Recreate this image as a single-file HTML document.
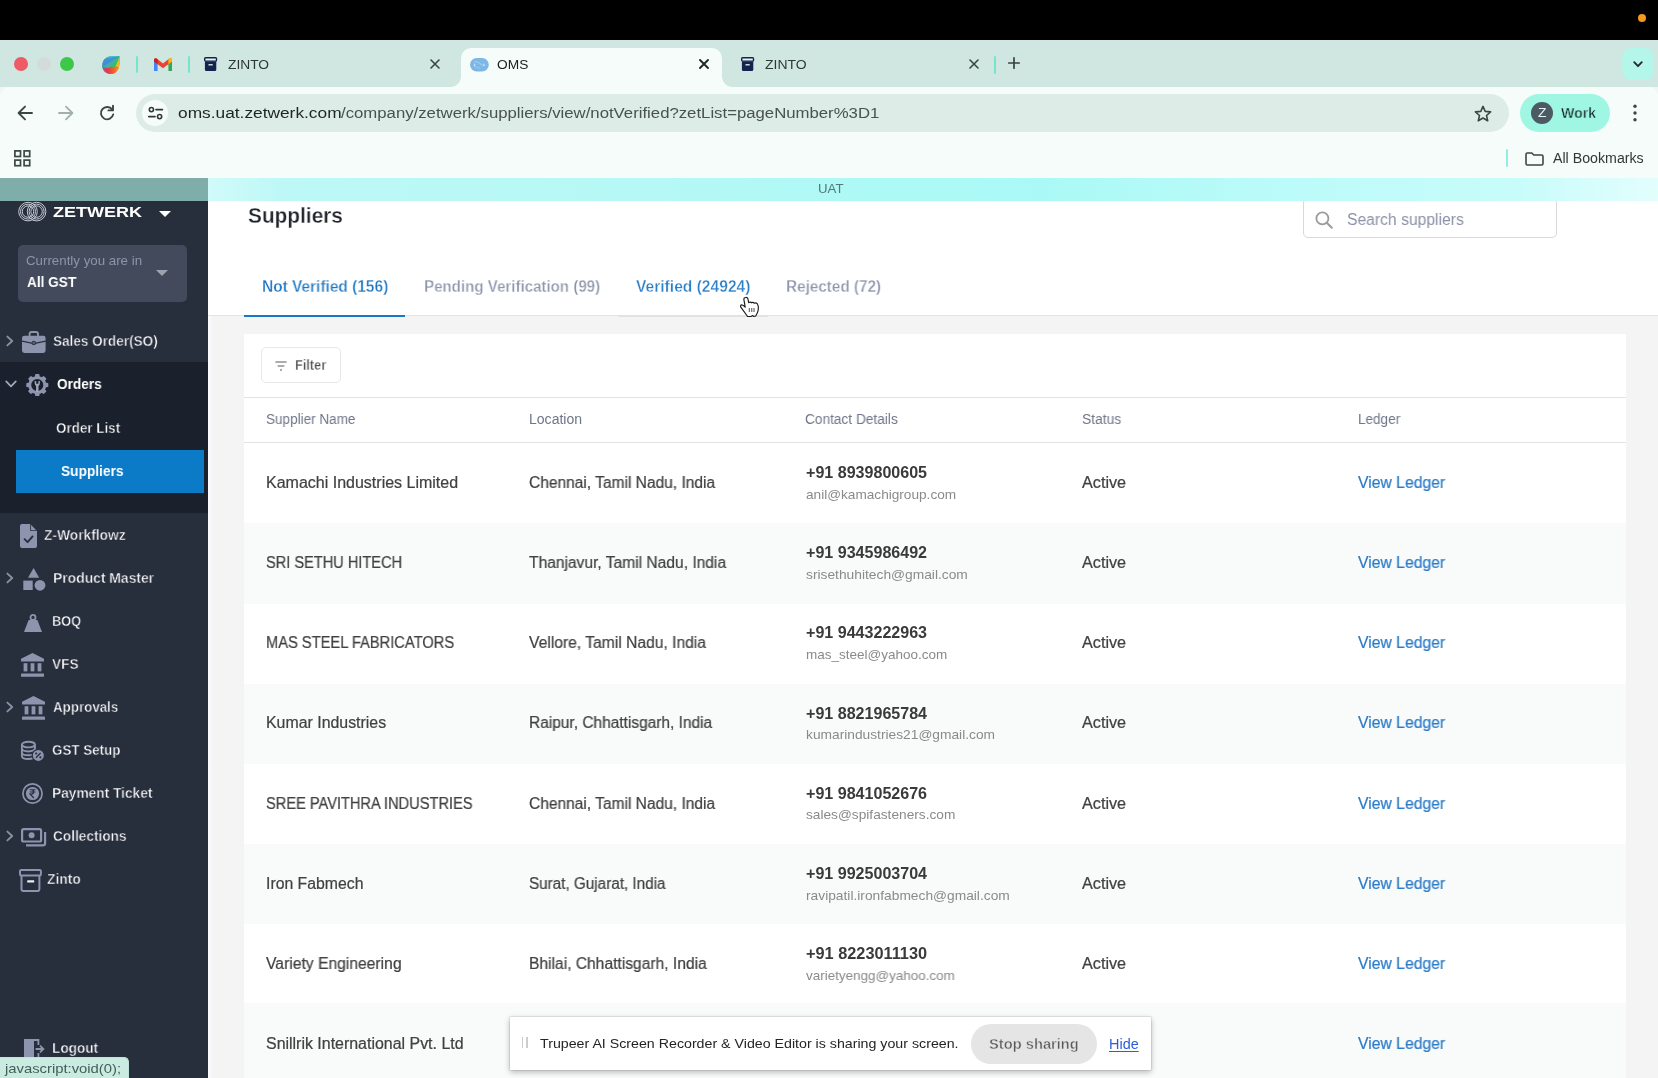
<!DOCTYPE html>
<html lang="en"><head><meta charset="utf-8"><title>OMS</title>
<style>
*{box-sizing:border-box;margin:0;padding:0}
html,body{width:1658px;height:1078px;overflow:hidden;background:#f4f4f4}
body{position:relative;font-family:"Liberation Sans",sans-serif;color:#3f3f3f;-webkit-font-smoothing:antialiased}
div,span,svg,aside,main,nav,header,section,a{position:absolute;display:block}
.t{white-space:nowrap;will-change:transform}
.m{-webkit-text-stroke:0.35px currentColor}
.b{font-weight:700}
.r{-webkit-text-stroke:0.22px currentColor}
a{text-decoration:none;color:inherit}
.ic{overflow:visible}
/* ---- OS + browser chrome ---- */
#osbar{left:0;top:0;width:1658px;height:40px;background:#000}
#osdot{left:1638px;top:14px;width:8px;height:8px;border-radius:50%;background:#f39a1e}
#tabstrip{left:0;top:40px;width:1658px;height:47px;background:#cfe7e0}
.tl{width:14px;height:14px;border-radius:50%;top:17px}
.tabsep{width:2px;height:17px;top:16px;background:#7be3cc;border-radius:1px}
#tab-active{left:461px;top:8px;width:261px;height:39px;background:#f6fcf9;border-radius:10px 10px 0 0}
#tab-active:before,#tab-active:after{content:"";position:absolute;bottom:0;width:10px;height:10px}
#tab-active:before{left:-10px;background:radial-gradient(circle at 0 0,transparent 9.5px,#f6fcf9 10px)}
#tab-active:after{right:-10px;background:radial-gradient(circle at 100% 0,transparent 9.5px,#f6fcf9 10px)}
#tabmenu{left:1622px;top:8px;width:32px;height:32px;border-radius:9px;background:#b4f6ea}
#toolbar{left:0;top:87px;width:1658px;height:91px;background:#f6fcf9;border-radius:9px 9px 0 0}
#omnibox{left:136px;top:7px;width:1373px;height:38px;border-radius:19px;background:#deece7}
#siteinfo{left:6px;top:6px;width:26px;height:26px;border-radius:50%;background:#f6fcf9}
#profile{left:1520px;top:7px;width:90px;height:38px;border-radius:19px;background:#9ff6e2}
#avatar{left:11px;top:8px;width:22px;height:22px;border-radius:50%;background:#4b5a63}
#bmsep{left:1506px;top:62px;width:2px;height:18px;background:#8ff0de;border-radius:1px}
/* ---- app ---- */
#uat{z-index:2;left:208px;top:178px;width:1450px;height:23.2px;background:linear-gradient(90deg,#d0fbfa 0%,#bdf8f6 5%,#b6f8f5 30%,#adf9f6 46%,#abf9f6 58%,#bbfbf9 74%,#c7fcfa 90%,#e2fefd 100%)}
#sidetop{z-index:2;left:0;top:178px;width:208px;height:23.2px;background:#7faeaa}
#sidebar{left:0;top:201px;width:208px;height:877px;background:#272e3c;overflow:hidden}
#gstbox{left:18px;top:44.4px;width:169px;height:56.6px;border-radius:5px;background:#434a5b}
#navopen{left:0;top:161px;width:208px;height:151px;background:#1b212c}
#navsel{left:16px;top:248.6px;width:187.6px;height:43.2px;background:#0b7bc8}
.caret{width:0;height:0;border-left:6px solid transparent;border-right:6px solid transparent;border-top:6px solid #fff}
#main{left:208px;top:200.8px;width:1450px;height:878px;background:#f4f4f4;overflow:hidden}
#head{left:0;top:0;width:1450px;height:115.4px;background:#fff;border-bottom:1px solid #e4e4e4}
#search{left:1095px;top:-2.8px;width:254px;height:40px;border:1px solid #d9d9d9;border-radius:5px;background:#fff}
#tabline{left:36px;top:113.9px;width:161px;height:2.6px;background:#1b77c5}
#hoverline{left:410px;top:114.4px;width:150px;height:1.6px;background:#e2e2e2}
#card{left:36px;top:133.2px;width:1382px;height:760px;background:#fff}
#filterbtn{left:16.5px;top:13px;width:80px;height:36px;border:1px solid #e8e8e8;border-radius:5px;background:#fff}
.hl{left:0;width:1382px;height:1.4px;background:#e3e3e3}
.row{left:0;width:1382px;height:80px}
.row.alt{background:#f9fafa}
/* ---- overlays ---- */
#share{left:510px;top:1017.2px;width:641px;height:52.4px;background:#fff;box-shadow:0 0 0 0.6px rgba(0,0,0,.12),0 2px 6px rgba(0,0,0,.28)}
#stopbtn{left:461.4px;top:6.5px;width:126px;height:40.4px;border-radius:20.2px;background:#e5e5e5}
.grip{width:1.4px;height:11px;top:19.4px;background:#cdcdcd}
#status{left:0;top:1057px;width:129px;height:21px;background:#c9ebe0;border-radius:0 5px 0 0;border-top:1px solid #c0e2d8;border-right:1px solid #c0e2d8}
#edge{left:0;top:115px;width:5px;height:770px;background:linear-gradient(90deg,#fbfcff,#f4f4f4)}

</style></head>
<body>
<div id="osbar"><div id="osdot"></div></div>
<header id="tabstrip"><div class="tl" style="left:14px;background:#ee5a66"></div><div class="tl" style="left:37px;background:#d4dcd9"></div><div class="tl" style="left:60px;background:#3ec84a"></div><svg class="ic" style="left:101.8px;top:15.7px" width="18" height="18" viewBox="0 0 18 18" ><defs><clipPath id="lf"><path d="M9 0.3 C13 0.3 17.4 0.2 17.8 0.4 C18 4.4 17.8 8.6 16.6 12 C15 16.4 11.6 18 8.6 18 C4 18 0.3 14.4 0.3 9.6 C0.3 4.4 4.2 0.3 9 0.3 Z"/></clipPath><linearGradient id="lfb" x1="0" y1="0" x2="1" y2="0"><stop offset="0" stop-color="#8d5bc4"/><stop offset="0.35" stop-color="#e23a4e"/><stop offset="0.7" stop-color="#f2642a"/><stop offset="1" stop-color="#f7a325"/></linearGradient></defs><g clip-path="url(#lf)"><rect width="18" height="18" fill="#41b95e"/><path d="M18 0 L-2 4 L-2 -2 Z" fill="#37bfe0"/><path d="M18 0 L-2 4 L-2 13 Z" fill="#3f8fdc"/><path d="M18 0 L-2 13 L-2 20 L2 20 Z" fill="#3db2a0"/><path d="M18 0 L11 20 L20 20 Z" fill="#f6b52c"/><path d="M18 0 L9.6 20 L12.4 20 Z" fill="#c9cf3a"/><path d="M-1 11 C3 11.4 7 13 8.6 10.4 C10 12 13 12 14.6 10 L18 12 L18 19 L-1 19 Z" fill="url(#lfb)"/></g></svg><div class="tabsep" style="left:136px"></div><svg class="ic" style="left:154px;top:17.8px" width="18" height="13" viewBox="0 0 18 13" ><path d="M0 2 V13 H3.6 V6.2 Z" fill="#4285f4"/><path d="M18 2 V13 H14.4 V6.2 Z" fill="#34a853"/><path d="M0 2 Q0 0.3 1.6 0.3 Q2.4 0.3 3 0.8 L9 5.4 L15 0.8 Q15.6 0.3 16.4 0.3 Q18 0.3 18 2 V3.4 L9 10.2 L0 3.4 Z" fill="#ea4335"/><path d="M14.4 1.3 L15 0.8 Q15.6 0.3 16.4 0.3 Q18 0.3 18 2 V3.4 L14.4 6.2 Z" fill="#fbbc04"/><path d="M3.6 1.3 L3 0.8 Q2.4 0.3 1.6 0.3 Q0 0.3 0 2 V3.4 L3.6 6.2 Z" fill="#c5221f"/></svg><div class="tabsep" style="left:188px"></div><svg class="ic" style="left:203.6px;top:17.1px" width="13.2" height="14.2" viewBox="0 0 13.2 14.2" ><rect x="0.7" y="0.7" width="11.8" height="3.4" rx="0.9" fill="#e6f1ee" stroke="#13234d" stroke-width="1.4"/><path d="M0.9 4.6 H12.3 V12.4 Q12.3 13.9 10.8 13.9 H2.4 Q0.9 13.9 0.9 12.4 Z" fill="#13234d"/><rect x="4.4" y="6.9" width="4.4" height="1.5" rx="0.5" fill="#c9d6dd"/></svg><span class="t" style="left:228.4px;top:15.7px;font-size:13px;line-height:17px;color:#2d3836;transform:scaleX(1.060);transform-origin:0 50%;">ZINTO</span><svg class="ic" style="left:430px;top:19px" width="10" height="10" viewBox="0 0 10 10" ><path d="M1 1 L9 9 M9 1 L1 9" stroke="#3a4442" stroke-width="1.6" stroke-linecap="round"/></svg><div id="tab-active"></div><svg class="ic" style="left:469.5px;top:18px" width="19" height="14" viewBox="0 0 19 14" ><rect x="0" y="0" width="18.8" height="13.4" rx="6.7" fill="#7db7e6"/><path d="M4.2 4 C7 2.4 9 5 11 6.4 C12.6 7.6 14 8 15.4 7" fill="none" stroke="#9fcbee" stroke-width="1.1"/><path d="M3.6 7.6 C5.6 9.6 8 9 10 10.4" fill="none" stroke="#9fcbee" stroke-width="1"/><rect x="4" y="5.4" width="1.3" height="2.8" rx="0.6" fill="#c3e0f6"/><rect x="13.2" y="5.4" width="1.3" height="2.8" rx="0.6" fill="#c3e0f6"/></svg><span class="t" style="left:496.8px;top:15.5px;font-size:13px;line-height:17px;color:#1b1f1e;transform:scaleX(1.057);transform-origin:0 50%;">OMS</span><svg class="ic" style="left:698.5px;top:19px" width="10" height="10" viewBox="0 0 10 10" ><path d="M1 1 L9 9 M9 1 L1 9" stroke="#1d2826" stroke-width="1.9" stroke-linecap="round"/></svg><svg class="ic" style="left:740.6px;top:17.1px" width="13.2" height="14.2" viewBox="0 0 13.2 14.2" ><rect x="0.7" y="0.7" width="11.8" height="3.4" rx="0.9" fill="#e6f1ee" stroke="#13234d" stroke-width="1.4"/><path d="M0.9 4.6 H12.3 V12.4 Q12.3 13.9 10.8 13.9 H2.4 Q0.9 13.9 0.9 12.4 Z" fill="#13234d"/><rect x="4.4" y="6.9" width="4.4" height="1.5" rx="0.5" fill="#c9d6dd"/></svg><span class="t" style="left:765.0px;top:15.7px;font-size:13px;line-height:17px;color:#2d3836;transform:scaleX(1.073);transform-origin:0 50%;">ZINTO</span><svg class="ic" style="left:968.5px;top:19px" width="10" height="10" viewBox="0 0 10 10" ><path d="M1 1 L9 9 M9 1 L1 9" stroke="#3a4442" stroke-width="1.6" stroke-linecap="round"/></svg><div class="tabsep" style="left:994px;top:16px;height:17.5px"></div><svg class="ic" style="left:1008px;top:17.4px" width="12" height="12" viewBox="0 0 12 12" ><path d="M6 0.8 V11.2 M0.8 6 H11.2" stroke="#3a4442" stroke-width="1.7" stroke-linecap="round"/></svg><div id="tabmenu"></div><svg class="ic" style="left:1632.5px;top:21px" width="10" height="7" viewBox="0 0 10 7" ><path d="M1.2 1.2 L5 5.2 L8.8 1.2" fill="none" stroke="#1f2a28" stroke-width="1.8" stroke-linecap="round" stroke-linejoin="round"/></svg></header>
<div id="toolbar"><svg class="ic" style="left:17px;top:18px" width="16" height="16" viewBox="0 0 16 16" ><path d="M15 8 H2 M8 1.6 L1.6 8 L8 14.4" fill="none" stroke="#3c4644" stroke-width="1.9" stroke-linecap="round" stroke-linejoin="round"/></svg><svg class="ic" style="left:58px;top:18px" width="16" height="16" viewBox="0 0 16 16" ><path d="M1 8 H14 M8 1.6 L14.4 8 L8 14.4" fill="none" stroke="#a3afab" stroke-width="1.8" stroke-linecap="round" stroke-linejoin="round"/></svg><svg class="ic" style="left:98.5px;top:18px" width="16" height="16" viewBox="0 0 16 16" ><path d="M13.2 4.6 A6.2 6.2 0 1 0 14.2 9.4" fill="none" stroke="#3c4644" stroke-width="1.9" stroke-linecap="round"/><path d="M14 0.8 V5.4 H9.4" fill="none" stroke="#3c4644" stroke-width="1.9" stroke-linecap="round" stroke-linejoin="round"/></svg><div id="omnibox"><div id="siteinfo"></div></div><svg class="ic" style="left:147.5px;top:19px" width="15" height="14" viewBox="0 0 15 14" ><circle cx="3.4" cy="3.6" r="2.1" fill="none" stroke="#2f3836" stroke-width="1.6"/><path d="M8 3.6 H14.4" stroke="#2f3836" stroke-width="1.7" stroke-linecap="round"/><circle cx="11.6" cy="10.6" r="2.1" fill="none" stroke="#2f3836" stroke-width="1.6"/><path d="M0.8 10.6 H7" stroke="#2f3836" stroke-width="1.7" stroke-linecap="round"/></svg><span class="t" style="left:177.5px;top:16.2px;font-size:15.5px;line-height:20px;color:#1c2523;transform:scaleX(1.117);transform-origin:0 50%;">oms.uat.zetwerk.com</span><span class="t" style="left:341.1px;top:16.2px;font-size:15.5px;line-height:20px;color:#48524f;transform:scaleX(1.080);transform-origin:0 50%;">/company/zetwerk/suppliers/view/notVerified?zetList=pageNumber%3D1</span><svg class="ic" style="left:1474px;top:17.5px" width="18" height="17" viewBox="0 0 18 17" ><path d="M9 1.4 L11.2 6.4 L16.6 6.9 L12.5 10.5 L13.7 15.8 L9 13 L4.3 15.8 L5.5 10.5 L1.4 6.9 L6.8 6.4 Z" fill="none" stroke="#3c4644" stroke-width="1.6" stroke-linejoin="round"/></svg><div id="profile"><div id="avatar"></div></div><span class="t" style="left:1538.3px;top:18.3px;font-size:12px;line-height:16px;color:#e6f3ef;transform:scaleX(1.157);transform-origin:0 50%;">Z</span><span class="t b" style="left:1561.2px;top:16.8px;font-size:14.6px;line-height:19px;color:#0c2422;transform:scaleX(0.969);transform-origin:0 50%;-webkit-text-stroke:0.45px #9ff6e2;">Work</span><svg class="ic" style="left:1633px;top:17px" width="4" height="18" viewBox="0 0 4 18" ><circle cx="2" cy="2.2" r="1.7" fill="#3c4644"/><circle cx="2" cy="9" r="1.7" fill="#3c4644"/><circle cx="2" cy="15.8" r="1.7" fill="#3c4644"/></svg><svg class="ic" style="left:14px;top:62.5px" width="17" height="17" viewBox="0 0 17 17" ><rect x="0.9" y="0.9" width="5.6" height="5.6" fill="none" stroke="#3c4644" stroke-width="1.7"/><rect x="10.1" y="0.9" width="5.6" height="5.6" fill="none" stroke="#3c4644" stroke-width="1.7"/><rect x="0.9" y="10.1" width="5.6" height="5.6" fill="none" stroke="#3c4644" stroke-width="1.7"/><rect x="10.1" y="10.1" width="5.6" height="5.6" fill="none" stroke="#3c4644" stroke-width="1.7"/></svg><div id="bmsep"></div><svg class="ic" style="left:1525px;top:64.5px" width="19" height="14" viewBox="0 0 19 14" ><path d="M1 2.4 Q1 1 2.4 1 H6.8 L8.8 3 H16.6 Q18 3 18 4.4 V11.6 Q18 13 16.6 13 H2.4 Q1 13 1 11.6 Z" fill="none" stroke="#3c4644" stroke-width="1.6" stroke-linejoin="round"/></svg><span class="t" style="left:1552.9px;top:62.2px;font-size:14px;line-height:18px;color:#2f3836;transform:scaleX(1.014);transform-origin:0 50%;">All Bookmarks</span></div>
<div id="sidetop"></div>
<div id="uat"><span class="t" style="left:609.5px;top:2.1px;font-size:13px;line-height:17px;color:#4f7b7b;transform:scaleX(1.018);transform-origin:0 50%;">UAT</span></div>
<aside id="sidebar"><svg class="ic" style="left:17.5px;top:-0.5px" width="29" height="21" viewBox="0 0 29 21" ><circle cx="10" cy="10.6" r="9.3" fill="none" stroke="#c6c9d3" stroke-width="1"/><circle cx="18.6" cy="10.6" r="9.3" fill="none" stroke="#c6c9d3" stroke-width="1"/><circle cx="10" cy="10.6" r="7.5" fill="none" stroke="#c6c9d3" stroke-width="1"/><circle cx="18.6" cy="10.6" r="7.5" fill="none" stroke="#c6c9d3" stroke-width="1"/><circle cx="10" cy="10.6" r="5.7" fill="none" stroke="#c6c9d3" stroke-width="1"/><circle cx="18.6" cy="10.6" r="5.7" fill="none" stroke="#c6c9d3" stroke-width="1"/></svg><span class="t b" style="left:52.5px;top:0.5px;font-size:15px;line-height:20px;color:#fff;transform:scaleX(1.201);transform-origin:0 50%;">ZETWERK</span><div class="caret" style="left:158.5px;top:9.5px"></div><div id="gstbox"></div><span class="t" style="left:25.5px;top:50.8px;font-size:13px;line-height:17px;color:#8d94a8;transform:scaleX(1.023);transform-origin:0 50%;">Currently you are in</span><span class="t b" style="left:26.5px;top:71.9px;font-size:14.8px;line-height:19px;color:#fff;transform:scaleX(0.919);transform-origin:0 50%;">All GST</span><div class="caret" style="left:156px;top:69px;border-top-color:#9da2ad;border-left-width:6.5px;border-right-width:6.5px;border-top-width:6.5px"></div><div id="navopen"></div><div id="navsel"></div><svg class="ic" style="left:6px;top:134px" width="8" height="12" viewBox="0 0 8 12" ><path d="M1.4 1.6 L6.2 6 L1.4 10.4" fill="none" stroke="#8a90a6" stroke-width="1.9" stroke-linecap="round" stroke-linejoin="round"/></svg><svg class="ic" style="left:22.2px;top:129.8px" width="24" height="22" viewBox="0 0 24 22" ><path d="M7.6 5 V3 Q7.6 1 9.6 1 H14 Q16 1 16 3 V5" fill="none" stroke="#8d94ad" stroke-width="1.9"/><path d="M2.4 4.8 H21.2 Q23.6 4.8 23.6 7.2 V9.4 L14 11.4 Q13.6 9.8 11.8 9.8 Q10 9.8 9.6 11.4 L0 9.4 V7.2 Q0 4.8 2.4 4.8 Z" fill="#8d94ad"/><path d="M0 10.7 L9.5 12.7 Q10 14 11.8 14 Q13.6 14 14.1 12.7 L23.6 10.7 V19.6 Q23.6 22 21.2 22 H2.4 Q0 22 0 19.6 Z" fill="#8d94ad"/><ellipse cx="11.8" cy="11.9" rx="1.5" ry="1.1" fill="#8d94ad" opacity="0.55"/></svg><span class="t b" style="left:52.9px;top:130.0px;font-size:15px;line-height:20px;color:#fdfdfe;transform:scaleX(0.903);transform-origin:0 50%;-webkit-text-stroke:0.45px #272e3c;">Sales Order(SO)</span><svg class="ic" style="left:4.9px;top:179.2px" width="12" height="8" viewBox="0 0 12 8" ><path d="M1.2 1.4 L6 6.4 L10.8 1.4" fill="none" stroke="#a3a9bc" stroke-width="1.7" stroke-linecap="round" stroke-linejoin="round"/></svg><svg class="ic" style="left:26.4px;top:173px" width="22.6" height="22" viewBox="0 0 22.6 22" ><path d="M9.2 0.6 Q9.2 0 9.8 0 H12.8 Q13.4 0 13.4 0.6 L14 4.6 H8.6 Z" fill="#8d94ad" transform="rotate(0 11.3 11)"/><path d="M9.2 0.6 Q9.2 0 9.8 0 H12.8 Q13.4 0 13.4 0.6 L14 4.6 H8.6 Z" fill="#8d94ad" transform="rotate(45 11.3 11)"/><path d="M9.2 0.6 Q9.2 0 9.8 0 H12.8 Q13.4 0 13.4 0.6 L14 4.6 H8.6 Z" fill="#8d94ad" transform="rotate(90 11.3 11)"/><path d="M9.2 0.6 Q9.2 0 9.8 0 H12.8 Q13.4 0 13.4 0.6 L14 4.6 H8.6 Z" fill="#8d94ad" transform="rotate(135 11.3 11)"/><path d="M9.2 0.6 Q9.2 0 9.8 0 H12.8 Q13.4 0 13.4 0.6 L14 4.6 H8.6 Z" fill="#8d94ad" transform="rotate(180 11.3 11)"/><path d="M9.2 0.6 Q9.2 0 9.8 0 H12.8 Q13.4 0 13.4 0.6 L14 4.6 H8.6 Z" fill="#8d94ad" transform="rotate(225 11.3 11)"/><path d="M9.2 0.6 Q9.2 0 9.8 0 H12.8 Q13.4 0 13.4 0.6 L14 4.6 H8.6 Z" fill="#8d94ad" transform="rotate(270 11.3 11)"/><path d="M9.2 0.6 Q9.2 0 9.8 0 H12.8 Q13.4 0 13.4 0.6 L14 4.6 H8.6 Z" fill="#8d94ad" transform="rotate(315 11.3 11)"/><circle cx="11.3" cy="11" r="7.6" fill="none" stroke="#8d94ad" stroke-width="3"/><path d="M8.6 7 L8.8 9.8 Q9 11.4 10.1 12 V18 H12.5 V12 Q13.6 11.4 13.8 9.8 L14 7 L12.4 7.2 V9.8 H10.2 V7.2 Z" fill="#a0a6bd"/></svg><span class="t b" style="left:56.5px;top:173.5px;font-size:14.8px;line-height:19px;color:#fff;transform:scaleX(0.923);transform-origin:0 50%;">Orders</span><span class="t b" style="left:56.1px;top:217.0px;font-size:15px;line-height:20px;color:#fdfdfe;transform:scaleX(0.894);transform-origin:0 50%;-webkit-text-stroke:0.45px #1b212c;">Order List</span><span class="t b" style="left:60.5px;top:260.5px;font-size:14.8px;line-height:19px;color:#fff;transform:scaleX(0.927);transform-origin:0 50%;">Suppliers</span><svg class="ic" style="left:20px;top:323px" width="17" height="24" viewBox="0 0 17 24" ><path d="M2 0 H10 L17 7 V22 Q17 24 15 24 H2 Q0 24 0 22 V2 Q0 0 2 0 Z" fill="#8d94ad"/><path d="M10 0 V5.4 Q10 7 11.6 7 H17 Z" fill="#272e3c"/><path d="M10.8 0.8 L16.2 6.2 H11.8 Q10.8 6.2 10.8 5.2 Z" fill="#8d94ad"/><path d="M4.6 15.2 L7.6 18.2 L12.6 12.4" fill="none" stroke="#272e3c" stroke-width="1.9" stroke-linecap="round" stroke-linejoin="round"/></svg><span class="t b" style="left:44.0px;top:324.0px;font-size:15px;line-height:20px;color:#fdfdfe;transform:scaleX(0.918);transform-origin:0 50%;-webkit-text-stroke:0.45px #272e3c;">Z-Workflowz</span><svg class="ic" style="left:6px;top:371px" width="8" height="12" viewBox="0 0 8 12" ><path d="M1.4 1.6 L6.2 6 L1.4 10.4" fill="none" stroke="#8a90a6" stroke-width="1.9" stroke-linecap="round" stroke-linejoin="round"/></svg><svg class="ic" style="left:23px;top:367px" width="23" height="23" viewBox="0 0 23 23" ><path d="M10.6 0 L16.2 9.8 H5 Z" fill="#8d94ad"/><rect x="0.3" y="12.6" width="9.4" height="9.4" fill="#8d94ad"/><circle cx="17" cy="17.3" r="5.4" fill="#8d94ad"/></svg><span class="t b" style="left:53.1px;top:367.0px;font-size:15px;line-height:20px;color:#fdfdfe;transform:scaleX(0.926);transform-origin:0 50%;-webkit-text-stroke:0.45px #272e3c;">Product Master</span><svg class="ic" style="left:23.5px;top:412.5px" width="18" height="18" viewBox="0 0 18 18" ><circle cx="9" cy="3.4" r="2.5" fill="none" stroke="#8d94ad" stroke-width="1.8"/><path d="M4.6 6 H13.4 L18 18 H0 Z" fill="#8d94ad"/></svg><span class="t b" style="left:52.1px;top:410.0px;font-size:15px;line-height:20px;color:#fdfdfe;transform:scaleX(0.852);transform-origin:0 50%;-webkit-text-stroke:0.45px #272e3c;">BOQ</span><svg class="ic" style="left:21px;top:451.5px" width="23" height="24" viewBox="0 0 23 24" ><path d="M11.5 0 L23 5.8 V8.6 H0 V5.8 Z" fill="#8d94ad"/><rect x="2.6" y="10.2" width="3.8" height="8.2" fill="#8d94ad"/><rect x="9.6" y="10.2" width="3.8" height="8.2" fill="#8d94ad"/><rect x="16.6" y="10.2" width="3.8" height="8.2" fill="#8d94ad"/><rect x="0" y="20.6" width="23" height="3.2" rx="0.6" fill="#8d94ad"/></svg><span class="t b" style="left:52.1px;top:453.0px;font-size:15px;line-height:20px;color:#fdfdfe;transform:scaleX(0.908);transform-origin:0 50%;-webkit-text-stroke:0.45px #272e3c;">VFS</span><svg class="ic" style="left:6px;top:500px" width="8" height="12" viewBox="0 0 8 12" ><path d="M1.4 1.6 L6.2 6 L1.4 10.4" fill="none" stroke="#8a90a6" stroke-width="1.9" stroke-linecap="round" stroke-linejoin="round"/></svg><svg class="ic" style="left:22px;top:494.5px" width="23" height="24" viewBox="0 0 23 24" ><path d="M11.5 0 L23 5.8 V8.6 H0 V5.8 Z" fill="#8d94ad"/><rect x="2.6" y="10.2" width="3.8" height="8.2" fill="#8d94ad"/><rect x="9.6" y="10.2" width="3.8" height="8.2" fill="#8d94ad"/><rect x="16.6" y="10.2" width="3.8" height="8.2" fill="#8d94ad"/><rect x="0" y="20.6" width="23" height="3.2" rx="0.6" fill="#8d94ad"/></svg><span class="t b" style="left:53.1px;top:496.0px;font-size:15px;line-height:20px;color:#fdfdfe;transform:scaleX(0.890);transform-origin:0 50%;-webkit-text-stroke:0.45px #272e3c;">Approvals</span><svg class="ic" style="left:21.2px;top:539.8px" width="24" height="21" viewBox="0 0 24 21" ><ellipse cx="7.4" cy="3.6" rx="6.5" ry="2.8" fill="none" stroke="#8d94ad" stroke-width="1.9"/><path d="M0.9 3.6 V15 C0.9 19 13.9 19 13.9 15 V3.6" fill="none" stroke="#8d94ad" stroke-width="1.9"/><path d="M0.9 7.6 C0.9 11.4 13.9 11.4 13.9 7.6 M0.9 11.4 C0.9 15.2 13.9 15.2 13.9 11.4" fill="none" stroke="#8d94ad" stroke-width="1.9"/><circle cx="17.3" cy="14.4" r="6.1" fill="#8d94ad" stroke="#272e3c" stroke-width="1.2"/><path d="M15 16.8 L19.6 12" stroke="#272e3c" stroke-width="1.3"/><circle cx="15.2" cy="12.5" r="1.1" fill="#272e3c"/><circle cx="19.4" cy="16.3" r="1.1" fill="#272e3c"/></svg><span class="t b" style="left:52.1px;top:539.0px;font-size:15px;line-height:20px;color:#fdfdfe;transform:scaleX(0.893);transform-origin:0 50%;-webkit-text-stroke:0.45px #272e3c;">GST Setup</span><svg class="ic" style="left:22px;top:582px" width="21" height="21" viewBox="0 0 21 21" ><circle cx="10.5" cy="10.5" r="9.6" fill="none" stroke="#8d94ad" stroke-width="1.7"/><circle cx="10.5" cy="10.5" r="6.6" fill="#8d94ad"/><path d="M7.8 6.8 H13.4 M7.8 9 H13.4 M8 6.8 H9.4 Q11.6 6.8 11.6 9 Q11.6 11 9.4 11 H8 L11.8 15" fill="none" stroke="#272e3c" stroke-width="1.1"/></svg><span class="t b" style="left:52.1px;top:582.0px;font-size:15px;line-height:20px;color:#fdfdfe;transform:scaleX(0.915);transform-origin:0 50%;-webkit-text-stroke:0.45px #272e3c;">Payment Ticket</span><svg class="ic" style="left:6px;top:629px" width="8" height="12" viewBox="0 0 8 12" ><path d="M1.4 1.6 L6.2 6 L1.4 10.4" fill="none" stroke="#8a90a6" stroke-width="1.9" stroke-linecap="round" stroke-linejoin="round"/></svg><svg class="ic" style="left:21px;top:626.5px" width="26" height="19" viewBox="0 0 26 19" ><rect x="1.1" y="1.1" width="19" height="12.4" rx="1.6" fill="none" stroke="#8d94ad" stroke-width="2.2"/><circle cx="10.6" cy="7.3" r="3" fill="#8d94ad"/><path d="M24.1 4 V15.2 Q24.1 17.4 21.9 17.4 H5" fill="none" stroke="#8d94ad" stroke-width="2.2"/></svg><span class="t b" style="left:52.9px;top:625.0px;font-size:15px;line-height:20px;color:#fdfdfe;transform:scaleX(0.909);transform-origin:0 50%;-webkit-text-stroke:0.45px #272e3c;">Collections</span><svg class="ic" style="left:18.9px;top:667.6px" width="23" height="23" viewBox="0 0 23 23" ><rect x="1" y="1" width="20.9" height="5.4" rx="1.2" fill="none" stroke="#8d94ad" stroke-width="2"/><path d="M2.5 6.6 V20 Q2.5 21.9 4.4 21.9 H18.5 Q20.4 21.9 20.4 20 V6.6" fill="none" stroke="#8d94ad" stroke-width="2"/><rect x="8.2" y="11.3" width="7" height="2.3" rx="0.4" fill="#eceef4"/></svg><span class="t b" style="left:47.2px;top:667.6px;font-size:15px;line-height:20px;color:#fdfdfe;transform:scaleX(0.922);transform-origin:0 50%;-webkit-text-stroke:0.45px #272e3c;">Zinto</span><svg class="ic" style="left:23.5px;top:837.5px" width="21" height="20" viewBox="0 0 21 20" ><path d="M0 0 H10 V20 H0 Z" fill="#8d94ad"/><path d="M10 1 H14.4 V6 M14.4 14 V19 H10" fill="none" stroke="#8d94ad" stroke-width="1.8"/><path d="M11.6 10 H19 M16 6.6 L19.4 10 L16 13.4" fill="none" stroke="#8d94ad" stroke-width="1.8"/></svg><span class="t b" style="left:51.8px;top:837.3px;font-size:15px;line-height:20px;color:#fdfdfe;transform:scaleX(0.907);transform-origin:0 50%;-webkit-text-stroke:0.45px #272e3c;">Logout</span></aside>
<main id="main"><section id="head"><span class="t b" style="left:40.1px;top:0.3px;font-size:22.4px;line-height:29px;color:#20242a;transform:scaleX(0.930);transform-origin:0 50%;-webkit-text-stroke:0.3px #fff;">Suppliers</span><div id="search"></div><svg class="ic" style="left:1107px;top:10.2px" width="18" height="18" viewBox="0 0 18 18" ><circle cx="7.4" cy="7.4" r="6" fill="none" stroke="#9b9b9b" stroke-width="1.8"/><path d="M11.8 11.8 L16.8 16.8" stroke="#9b9b9b" stroke-width="2" stroke-linecap="round"/></svg><span class="t" style="left:1138.5px;top:8.0px;font-size:16px;line-height:21px;color:#8b91a8;transform:scaleX(0.980);transform-origin:0 50%;">Search suppliers</span><a class="t b" style="left:53.6px;top:76.0px;font-size:15.6px;line-height:20px;color:#1c76c3;transform:scaleX(0.991);transform-origin:0 50%;-webkit-text-stroke:0.3px #fff;">Not Verified (156)</a><a class="t b" style="left:215.7px;top:76.0px;font-size:15.6px;line-height:20px;color:#8e94ab;transform:scaleX(0.968);transform-origin:0 50%;-webkit-text-stroke:0.3px #fff;">Pending Verification (99)</a><a class="t b" style="left:428.2px;top:76.0px;font-size:15.6px;line-height:20px;color:#2a7fc9;-webkit-text-stroke:0.3px #fff;">Verified (24924)</a><a class="t b" style="left:578.4px;top:76.0px;font-size:15.6px;line-height:20px;color:#8e94ab;transform:scaleX(0.980);transform-origin:0 50%;-webkit-text-stroke:0.3px #fff;">Rejected (72)</a><div id="hoverline"></div><div id="tabline"></div></section><div id="edge"></div><section id="card"><div id="filterbtn"></div><svg class="ic" style="left:31.3px;top:26.8px" width="12" height="10" viewBox="0 0 12 10" ><path d="M0.4 1 H11.6 M2.6 5 H9.4 M5 9 H7" stroke="#5a5a5a" stroke-width="1.2"/></svg><span class="t b" style="left:51.3px;top:22.3px;font-size:14.2px;line-height:18px;color:#4d4d4d;transform:scaleX(0.897);transform-origin:0 50%;-webkit-text-stroke:0.3px #fff;">Filter</span><div class="hl" style="top:63px"></div><div class="hl" style="top:107.8px"></div><span class="t" style="left:21.7px;top:76.4px;font-size:14px;line-height:18px;color:#6f7689;transform:scaleX(0.966);transform-origin:0 50%;">Supplier Name</span><span class="t" style="left:285.0px;top:76.4px;font-size:14px;line-height:18px;color:#6f7689;transform:scaleX(1.003);transform-origin:0 50%;">Location</span><span class="t" style="left:561.4px;top:76.4px;font-size:14px;line-height:18px;color:#6f7689;transform:scaleX(0.977);transform-origin:0 50%;">Contact Details</span><span class="t" style="left:837.9px;top:76.4px;font-size:14px;line-height:18px;color:#6f7689;transform:scaleX(0.985);transform-origin:0 50%;">Status</span><span class="t" style="left:1114.4px;top:76.4px;font-size:14px;line-height:18px;color:#6f7689;transform:scaleX(0.966);transform-origin:0 50%;">Ledger</span><div class="row" style="top:109px;height:80px"></div><span class="t r" style="left:22.1px;top:137.9px;font-size:15.8px;line-height:21px;color:#414141;transform:scaleX(1.013);transform-origin:0 50%;">Kamachi Industries Limited</span><span class="t r" style="left:285.1px;top:137.9px;font-size:15.8px;line-height:21px;color:#414141;transform:scaleX(0.983);transform-origin:0 50%;">Chennai, Tamil Nadu, India</span><span class="t b" style="left:561.5px;top:128.0px;font-size:16px;line-height:21px;color:#3a3a3a;transform:scaleX(1.004);transform-origin:0 50%;">+91 8939800605</span><span class="t" style="left:561.5px;top:151.7px;font-size:13.5px;line-height:18px;color:#8a8a8a;transform:scaleX(1.009);transform-origin:0 50%;">anil@kamachigroup.com</span><span class="t r" style="left:838.0px;top:137.9px;font-size:15.8px;line-height:21px;color:#414141;transform:scaleX(1.025);transform-origin:0 50%;">Active</span><a class="t r" style="left:1114.4px;top:137.9px;font-size:15.8px;line-height:21px;color:#2b7bc8;transform:scaleX(0.995);transform-origin:0 50%;">View Ledger</a><div class="row alt" style="top:189px;height:81px"></div><span class="t r" style="left:22.1px;top:218.1px;font-size:15.8px;line-height:21px;color:#414141;transform:scaleX(0.923);transform-origin:0 50%;">SRI SETHU HITECH</span><span class="t r" style="left:285.1px;top:218.1px;font-size:15.8px;line-height:21px;color:#414141;transform:scaleX(0.986);transform-origin:0 50%;">Thanjavur, Tamil Nadu, India</span><span class="t b" style="left:561.5px;top:208.2px;font-size:16px;line-height:21px;color:#3a3a3a;transform:scaleX(1.004);transform-origin:0 50%;">+91 9345986492</span><span class="t" style="left:561.5px;top:231.9px;font-size:13.5px;line-height:18px;color:#8a8a8a;transform:scaleX(1.021);transform-origin:0 50%;">srisethuhitech@gmail.com</span><span class="t r" style="left:838.0px;top:218.1px;font-size:15.8px;line-height:21px;color:#414141;transform:scaleX(1.025);transform-origin:0 50%;">Active</span><a class="t r" style="left:1114.4px;top:218.1px;font-size:15.8px;line-height:21px;color:#2b7bc8;transform:scaleX(0.995);transform-origin:0 50%;">View Ledger</a><div class="row" style="top:270px;height:80px"></div><span class="t r" style="left:22.1px;top:298.3px;font-size:15.8px;line-height:21px;color:#414141;transform:scaleX(0.929);transform-origin:0 50%;">MAS STEEL FABRICATORS</span><span class="t r" style="left:285.1px;top:298.3px;font-size:15.8px;line-height:21px;color:#414141;transform:scaleX(0.990);transform-origin:0 50%;">Vellore, Tamil Nadu, India</span><span class="t b" style="left:561.5px;top:288.4px;font-size:16px;line-height:21px;color:#3a3a3a;transform:scaleX(1.004);transform-origin:0 50%;">+91 9443222963</span><span class="t" style="left:561.5px;top:312.1px;font-size:13.5px;line-height:18px;color:#8a8a8a;">mas_steel@yahoo.com</span><span class="t r" style="left:838.0px;top:298.3px;font-size:15.8px;line-height:21px;color:#414141;transform:scaleX(1.025);transform-origin:0 50%;">Active</span><a class="t r" style="left:1114.4px;top:298.3px;font-size:15.8px;line-height:21px;color:#2b7bc8;transform:scaleX(0.995);transform-origin:0 50%;">View Ledger</a><div class="row alt" style="top:350px;height:80px"></div><span class="t r" style="left:22.1px;top:378.5px;font-size:15.8px;line-height:21px;color:#414141;transform:scaleX(1.006);transform-origin:0 50%;">Kumar Industries</span><span class="t r" style="left:285.1px;top:378.5px;font-size:15.8px;line-height:21px;color:#414141;transform:scaleX(0.979);transform-origin:0 50%;">Raipur, Chhattisgarh, India</span><span class="t b" style="left:561.5px;top:368.6px;font-size:16px;line-height:21px;color:#3a3a3a;transform:scaleX(1.004);transform-origin:0 50%;">+91 8821965784</span><span class="t" style="left:561.5px;top:392.3px;font-size:13.5px;line-height:18px;color:#8a8a8a;transform:scaleX(1.019);transform-origin:0 50%;">kumarindustries21@gmail.com</span><span class="t r" style="left:838.0px;top:378.5px;font-size:15.8px;line-height:21px;color:#414141;transform:scaleX(1.025);transform-origin:0 50%;">Active</span><a class="t r" style="left:1114.4px;top:378.5px;font-size:15.8px;line-height:21px;color:#2b7bc8;transform:scaleX(0.995);transform-origin:0 50%;">View Ledger</a><div class="row" style="top:430px;height:80px"></div><span class="t r" style="left:22.1px;top:458.7px;font-size:15.8px;line-height:21px;color:#414141;transform:scaleX(0.925);transform-origin:0 50%;">SREE PAVITHRA INDUSTRIES</span><span class="t r" style="left:285.1px;top:458.7px;font-size:15.8px;line-height:21px;color:#414141;transform:scaleX(0.983);transform-origin:0 50%;">Chennai, Tamil Nadu, India</span><span class="t b" style="left:561.5px;top:448.8px;font-size:16px;line-height:21px;color:#3a3a3a;transform:scaleX(1.004);transform-origin:0 50%;">+91 9841052676</span><span class="t" style="left:561.5px;top:472.5px;font-size:13.5px;line-height:18px;color:#8a8a8a;transform:scaleX(1.014);transform-origin:0 50%;">sales@spifasteners.com</span><span class="t r" style="left:838.0px;top:458.7px;font-size:15.8px;line-height:21px;color:#414141;transform:scaleX(1.025);transform-origin:0 50%;">Active</span><a class="t r" style="left:1114.4px;top:458.7px;font-size:15.8px;line-height:21px;color:#2b7bc8;transform:scaleX(0.995);transform-origin:0 50%;">View Ledger</a><div class="row alt" style="top:510px;height:80px"></div><span class="t r" style="left:22.1px;top:539.0px;font-size:15.8px;line-height:21px;color:#414141;transform:scaleX(0.996);transform-origin:0 50%;">Iron Fabmech</span><span class="t r" style="left:285.1px;top:539.0px;font-size:15.8px;line-height:21px;color:#414141;transform:scaleX(0.966);transform-origin:0 50%;">Surat, Gujarat, India</span><span class="t b" style="left:561.5px;top:529.1px;font-size:16px;line-height:21px;color:#3a3a3a;transform:scaleX(1.004);transform-origin:0 50%;">+91 9925003704</span><span class="t" style="left:561.5px;top:552.8px;font-size:13.5px;line-height:18px;color:#8a8a8a;transform:scaleX(1.020);transform-origin:0 50%;">ravipatil.ironfabmech@gmail.com</span><span class="t r" style="left:838.0px;top:539.0px;font-size:15.8px;line-height:21px;color:#414141;transform:scaleX(1.025);transform-origin:0 50%;">Active</span><a class="t r" style="left:1114.4px;top:539.0px;font-size:15.8px;line-height:21px;color:#2b7bc8;transform:scaleX(0.995);transform-origin:0 50%;">View Ledger</a><div class="row" style="top:590px;height:79px"></div><span class="t r" style="left:22.1px;top:619.2px;font-size:15.8px;line-height:21px;color:#414141;transform:scaleX(0.992);transform-origin:0 50%;">Variety Engineering</span><span class="t r" style="left:285.1px;top:619.2px;font-size:15.8px;line-height:21px;color:#414141;transform:scaleX(0.987);transform-origin:0 50%;">Bhilai, Chhattisgarh, India</span><span class="t b" style="left:561.5px;top:609.3px;font-size:16px;line-height:21px;color:#3a3a3a;transform:scaleX(1.019);transform-origin:0 50%;">+91 8223011130</span><span class="t" style="left:561.5px;top:633.0px;font-size:13.5px;line-height:18px;color:#8a8a8a;transform:scaleX(0.995);transform-origin:0 50%;">varietyengg@yahoo.com</span><span class="t r" style="left:838.0px;top:619.2px;font-size:15.8px;line-height:21px;color:#414141;transform:scaleX(1.025);transform-origin:0 50%;">Active</span><a class="t r" style="left:1114.4px;top:619.2px;font-size:15.8px;line-height:21px;color:#2b7bc8;transform:scaleX(0.995);transform-origin:0 50%;">View Ledger</a><div class="row alt" style="top:669px;height:81px"></div><span class="t r" style="left:22.1px;top:699.4px;font-size:15.8px;line-height:21px;color:#414141;transform:scaleX(1.009);transform-origin:0 50%;">Snillrik International Pvt. Ltd</span><a class="t r" style="left:1114.4px;top:699.4px;font-size:15.8px;line-height:21px;color:#2b7bc8;transform:scaleX(0.995);transform-origin:0 50%;">View Ledger</a></section><svg class="ic" style="left:532px;top:95.8px" width="19" height="20" viewBox="0 0 19 20" ><path d="M5.6 0.5 C6.8 0.2 7.8 1 8 2.2 L8.7 5.6 C9.6 4.8 11 4.9 11.4 5.8 C12.4 5 13.8 5.2 14.2 6.2 C15.4 5.6 17 6 17.6 7.2 C18.6 9 18.5 12 18.1 13.6 C17.7 15.6 16.6 17.4 15.7 19 L13.8 19.4 L12.6 18.6 L11 19.5 L7.6 19.5 L1 10.4 C0 9 0.6 7.8 1.8 7.8 C3.2 7.8 4.2 9 5.2 10.2 L3.9 2.6 C3.6 1.4 4.4 0.7 5.6 0.5 Z" fill="#fff" stroke="#1a1a1a" stroke-width="1.15" stroke-linejoin="round"/><path d="M9.4 11 V15 M11.7 11 V15 M14 11 V15" stroke="#777" stroke-width="1.3"/></svg></main>
<div id="share"><div class="grip" style="left:11.8px"></div><div class="grip" style="left:16.4px"></div><span class="t" style="left:30.3px;top:17.9px;font-size:13.4px;line-height:17px;color:#242424;transform:scaleX(1.061);transform-origin:0 50%;">Trupeer AI Screen Recorder &amp; Video Editor is sharing your screen.</span><div id="stopbtn"></div><span class="t b" style="left:479.2px;top:17.5px;font-size:14.6px;line-height:19px;color:#585858;transform:scaleX(1.007);transform-origin:0 50%;-webkit-text-stroke:0.45px #e5e5e5;">Stop sharing</span><a class="t" style="left:599.0px;top:17.4px;font-size:14.4px;line-height:19px;color:#2a5ed8;transform:scaleX(1.003);transform-origin:0 50%;text-decoration:underline;text-underline-offset:1.5px;text-decoration-thickness:1px;">Hide</a></div>
<div id="status"><span class="t" style="left:5.0px;top:1.7px;font-size:13.4px;line-height:17px;color:#42605a;transform:scaleX(1.106);transform-origin:0 50%;">javascript:void(0);</span></div>
</body></html>
